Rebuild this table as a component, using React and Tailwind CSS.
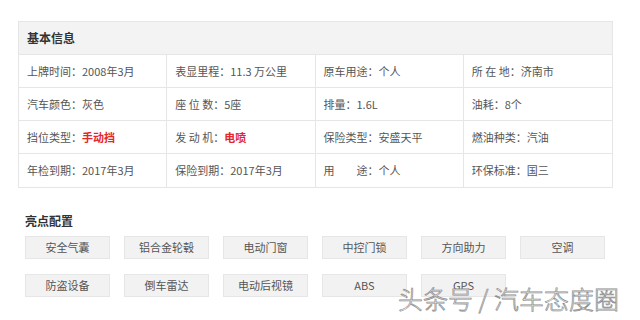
const rows = [
  [
    { label: '上牌时间', value: '2008年3月' },
    { label: '表显里程', value: '11.3 万公里' },
    { label: '原车用途', value: '个人' },
    { label: '所 在 地', value: '济南市' },
  ],
  [
    { label: '汽车颜色', value: '灰色' },
    { label: '座 位 数', value: '5座' },
    { label: '排量', value: '1.6L' },
    { label: '油耗', value: '8个' },
  ],
  [
    { label: '挡位类型', value: '手动挡', red: true },
    { label: '发 动 机', value: '电喷', red: true },
    { label: '保险类型', value: '安盛天平' },
    { label: '燃油种类', value: '汽油' },
  ],
  [
    { label: '年检到期', value: '2017年3月' },
    { label: '保险到期', value: '2017年3月' },
    { label: '用\u3000\u3000途', value: '个人' },
    { label: '环保标准', value: '国三' },
  ],
]

const features = [
  '安全气囊', '铝合金轮毂', '电动门窗', '中控门锁', '方向助力', '空调',
  '防盗设备', '倒车雷达', '电动后视镜', 'ABS', 'GPS',
]

export default function App() {
  return (
    <div className="relative w-[640px] h-[320px] overflow-hidden bg-white text-[#555] font-['Microsoft_YaHei','Noto_Sans_CJK_SC',sans-serif]">
      <div className="pt-[21px] pl-[18px]">
        <div className="w-[595px] border border-[#e6e6e6]">
          <div className="h-[33px] bg-[#f3f3f3] px-[8px] flex items-center text-[12px] font-bold text-[#333] border-b border-[#e6e6e6]">
            基本信息
          </div>
          {rows.map((row, i) => (
            <div key={i} className="grid grid-cols-4 h-[33px] border-b border-[#e6e6e6] last:border-b-0">
              {row.map((c, j) => (
                <div key={j} className="flex items-center px-[8px] text-[11px] border-r border-[#e6e6e6] last:border-r-0 whitespace-nowrap">
                  <span>{c.label}：</span>
                  {c.red ? (
                    <span className="text-[#e4262b] font-bold">{c.value}</span>
                  ) : (
                    <span>{c.value}</span>
                  )}
                </div>
              ))}
            </div>
          ))}
        </div>

        <div className="ml-[7px] mt-[25px]">
          <div className="h-[16px] leading-[16px] text-[12px] font-bold text-[#333]">亮点配置</div>
          <div className="mt-[7px] grid grid-cols-[repeat(6,85px)] gap-x-[14px] gap-y-[15px]">
            {features.map(f => (
              <div key={f} className="h-[23px] flex items-center justify-center bg-[#f2f2f2] border border-[#e6e6e6] text-[11px] text-[#555]">
                {f}
              </div>
            ))}
          </div>
        </div>
      </div>

      {/* watermark */}
      <div className="absolute left-[398px] top-[282px] text-[25px] leading-[32px] text-white [-webkit-text-stroke:0.7px_#8a8a8a] whitespace-nowrap font-['Noto_Sans_CJK_SC',sans-serif] font-light">
        头条号 / 汽车态度圈
      </div>
    </div>
  )
}
